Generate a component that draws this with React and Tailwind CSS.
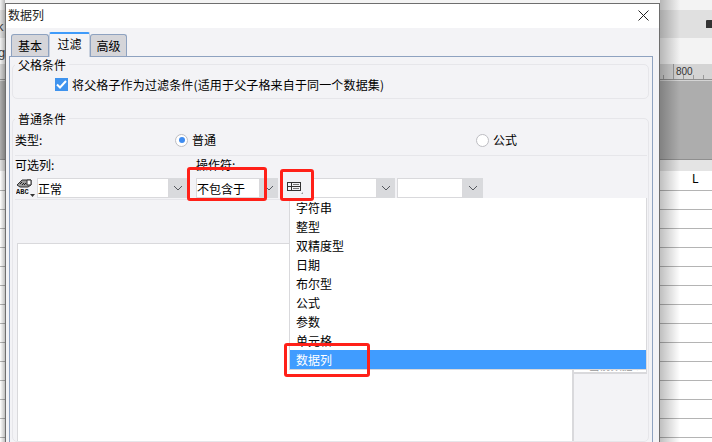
const font = { fontFamily: '"Noto Sans CJK SC", "Liberation Sans", sans-serif' };

function Arrow() {
  return (
    <svg width="10" height="6" viewBox="0 0 10 6" fill="none" stroke="#55585e" strokeWidth="1">
      <path d="M1 1l4 4 4-4" />
    </svg>
  );
}

function Select({ w, text, arrow = 18 }) {
  return (
    <div className="flex h-[20px] shrink-0" style={{ width: w }}>
      <div className="flex-1 bg-white border border-[#d9d9dc] flex items-center pt-[1px] text-[12px] text-black leading-none">{text}</div>
      <div className="bg-[#d9dadd] flex items-center justify-center" style={{ width: arrow }}>
        <Arrow />
      </div>
    </div>
  );
}

function Radio({ on }) {
  return (
    <div className="w-[13px] h-[13px] shrink-0 rounded-full border border-[#bdbdc2] bg-white flex items-center justify-center">
      {on && <div className="w-[6px] h-[6px] rounded-full bg-[#3f8cf0]" />}
    </div>
  );
}

function Group({ title, className, children }) {
  return (
    <div className={`relative ml-[2px] mr-[3px] border border-[#e6e6ea] rounded-[5px] ${className}`}>
      <div className="absolute left-[2px] top-[-8px] bg-[#f3f3f6] px-[3px] text-[12px] leading-[16px] text-black">{title}</div>
      {children}
    </div>
  );
}

export default function App() {
  const items = ['字符串', '整型', '双精度型', '日期', '布尔型', '公式', '参数', '单元格'];
  const rows = Array.from({ length: 14 });
  return (
    <div className="relative w-[712px] h-[442px] overflow-hidden bg-white" style={font}>
      {/* application behind the dialog */}
      <div className="flex flex-col h-full">
        <div className="h-[10px] shrink-0 bg-[#f3f3f3]" />
        <div className="h-[28px] shrink-0 bg-[#e0e0e0] flex justify-end items-center">
          <div className="w-[6px] h-[8px] bg-[#333] rounded-tl-[1px]" />
        </div>
        <div className="h-[26px] shrink-0 bg-[#f3f3f3]" />
        <svg width="712" height="17" viewBox="0 0 712 17" className="shrink-0 block bg-[#d4d4d4]">
          <path d="M673.500 0v15M663.500 11v4M683.500 11v4M693.500 11v4M703.500 11v4" stroke="#999" fill="none" />
          <path d="M0 15.500h712" stroke="#8f8f8f" fill="none" />
          <text x="676" y="11" fontSize="10" fill="#333" fontFamily="Liberation Sans">800</text>
        </svg>
        <div className="h-[79px] shrink-0 bg-[#adadad] border-b border-[#8f8f8f]" />
        <div className="h-[11px] shrink-0 bg-[#e4e4e4]" />
        <div className="h-[20px] shrink-0 bg-white border-b border-[#b4b4b4] text-right pr-[13px] text-[12px] leading-[19px] text-black" style={{ fontFamily: '"Liberation Mono", monospace' }}>L</div>
        {rows.map((_, i) => (
          <div key={i} className="h-[19px] shrink-0 border-b border-[#b4b4b4] bg-white" />
        ))}
      </div>
      <div className="absolute left-0 top-[5px] text-[13px] leading-none w-[5px] h-[60px] overflow-hidden text-[#444]" style={{ fontFamily: '"Liberation Sans", sans-serif' }}>
        <div className="mt-[15px] -ml-[3px]">k</div>
        <div className="mt-[13px] -ml-[2px]">g</div>
      </div>
      <div className="absolute left-0 top-0 w-[5px] h-full bg-gradient-to-r from-transparent to-black/25" />
      <div className="absolute left-[660px] top-0 w-[20px] h-full bg-gradient-to-r from-black/25 to-transparent" />

      {/* dialog window */}
      <div className="absolute left-[5px] top-[3px] w-[655px] h-[439px] flex flex-col bg-[#f3f3f6] border-x border-t border-[#6e6e6e]">
        <div className="h-[24px] shrink-0 bg-white flex items-center justify-between pl-[2px] pr-[10px] pb-[2px] text-[12px] text-[#222]">
          <span>数据列</span>
          <svg width="11" height="11" viewBox="0 0 11 11" stroke="#222" strokeWidth="1" fill="none">
            <path d="M.5.5l10 10M10.500.5l-10 10" />
          </svg>
        </div>
        <div className="flex items-end h-[28px] shrink-0 pl-[5px] text-[12px] text-black">
          <div className="w-[38px] h-[22px] bg-[#d5d5d9] border-x border-t border-[#8ea2c0] rounded-t-[3px] flex items-center justify-center">基本</div>
          <div className="w-[41px] h-[25px] -mb-px z-10 bg-[#f3f3f6] border-t-2 border-t-[#3f9bfa] border-x border-x-[#c9d1de] flex items-center justify-center rounded-t-[2px] pb-[3px]">过滤</div>
          <div className="w-[37px] h-[22px] bg-[#d5d5d9] border-x border-t border-[#8ea2c0] rounded-t-[3px] flex items-center justify-center">高级</div>
        </div>
        <div className="flex-1 ml-[3px] mr-[6px] border border-b-0 border-[#8ea2c0] flex flex-col text-[12px] text-black">
          <Group title="父格条件" className="mt-[7px] h-[35px] shrink-0 flex items-center pl-[42px]">
            <div className="flex items-center gap-[4px] mt-[6px]">
              <div className="w-[13px] h-[13px] bg-[#3f93ee] flex items-center justify-center">
                <svg width="11" height="9" viewBox="0 0 11 9" fill="none" stroke="#fff" strokeWidth="2"><path d="M1 4.500l3 3 6-6.500" /></svg>
              </div>
              <span className="text-[12px] whitespace-nowrap tracking-[0.15px]">将父格子作为过滤条件(适用于父子格来自于同一个数据集)</span>
            </div>
          </Group>
          <Group title="普通条件" className="mt-[19px] flex-1 flex flex-col pl-[2px] pr-[1px]">
            <div className="h-[37px] shrink-0 flex items-center pt-[8px] pb-[2px] border-b border-[#e6e6ea]">
              <span className="w-[160px]">类型:</span>
              <Radio on />
              <span className="ml-[4px] w-[284px]">普通</span>
              <Radio />
              <span className="ml-[4px]">公式</span>
            </div>
            <div className="h-[22px] shrink-0 flex items-start pt-[1px]">
              <span className="w-[181px] leading-[16px]">可选列:</span>
              <span className="leading-[16px]">操作符:</span>
            </div>
            <div className="flex items-center h-[20px] shrink-0 pl-[1px]">
              <svg width="19" height="20" viewBox="0 0 19 20" className="shrink-0">
                <path d="M1 7l5-5h9v5l-3 2H4z" fill="#9a9a9a" stroke="#333" strokeWidth="1" />
                <path d="M11 2h4v5h-4z" fill="#fff" stroke="#333" strokeWidth="1" />
                <path d="M4 6l2-2M6 7l2-2M8 7l2-2" stroke="#222" strokeWidth="1" />
                <text x="0" y="16" fontSize="7" fontWeight="700" fill="#111" fontFamily="Liberation Mono">ABC</text>
                <path d="M14 16h5l-2.500 3z" fill="#333" />
              </svg>
              <div className="w-[2px] shrink-0" />
              <Select w={150} text="正常" />
              <div className="w-[9px] shrink-0" />
              <Select w={82} text="不包含于" />
              <div className="w-[9px] shrink-0" />
              <svg width="16" height="14" viewBox="0 0 16 14" className="shrink-0" fill="none" stroke="#333" strokeWidth="1">
                <rect x=".5" y="1.500" width="13" height="8" />
                <path d="M.5 5.500h13M4.500 1.500v8" />
                <path d="M6 3.500h6M6 7.500h6" stroke="#777" />
                <path d="M14 13h2v-2z" fill="#999" stroke="none" />
              </svg>
              <div className="w-[10px] shrink-0" />
              <Select w={82} text="" />
              <div className="w-[2px] shrink-0" />
              <Select w={86} text="" arrow={20} />
            </div>
            <div className="border-t border-[#e6e6ea] mt-[1px]" />
            <div className="flex-1 flex mt-[43px] ml-[2px]">
              <div className="flex-1 bg-white border border-[#d9d9dc] border-b-0" />
              <div className="w-[74px] border-l border-[#d9d9dc]">
                <div className="h-[131px] bg-white border-r border-b-2 border-[#d9d9dc] flex items-end justify-center overflow-hidden text-[11px] leading-[13px] text-[#999] whitespace-nowrap">
                  ✕ 当前数据 ✓
                </div>
              </div>
            </div>
          </Group>
        </div>
      </div>

      {/* dropdown */}
      <div className="absolute left-[289px] top-[198px] w-[358px] h-[172px] bg-white border-l border-b border-r border-[#d9d9dc] text-[12px] text-black">
        {items.map((t) => (
          <div key={t} className="h-[19px] pl-[6px] leading-[19px]">{t}</div>
        ))}
        <div className="h-[19px] pl-[6px] leading-[19px] bg-[#409cff] text-white">数据列</div>
      </div>

      {/* annotations */}
      <div className="absolute left-[187px] top-[167px] w-[80px] h-[34px] border-[3px] border-[#ff2018] rounded-[3px]" />
      <div className="absolute left-[280px] top-[169px] w-[34px] h-[32px] border-[3px] border-[#ff2018] rounded-[3px]" />
      <div className="absolute left-[284px] top-[343px] w-[86px] h-[34px] border-[3px] border-[#ff2018] rounded-[3px]" />
    </div>
  );
}
